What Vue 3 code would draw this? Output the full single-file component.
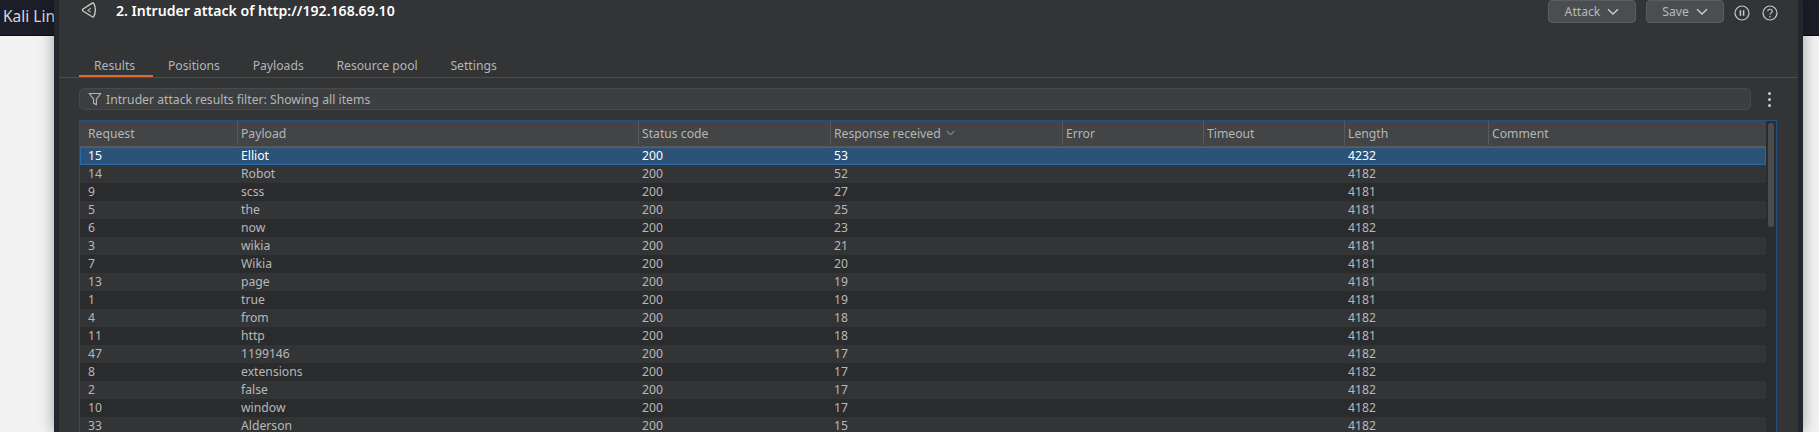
<template>
  <div class="desktop">
    <header class="topbar">
      <span class="topbar-text">Kali Linux</span>
    </header>

    <section class="attack-window">
      <div class="title-row">
        <svg class="logo" viewBox="0 0 16 16" width="16" height="16" fill="none" stroke="#cfcfcf" stroke-width="1.3">
          <path d="M11.6 0.9 Q12.3 0.7 12.7 1.3 C14.9 5 14.9 11 12.7 14.7 Q12.3 15.3 11.6 15 L2 9 Q0.8 8 2 7 Z" stroke-linejoin="round" />
          <path d="M10 6 L6.6 8.4 L9.8 10" stroke-width="1" />
        </svg>
        <h1 class="title">2. Intruder attack of http://192.168.69.10</h1>
        <div class="title-actions">
          <button class="action-btn attack-btn">
            Attack
            <svg viewBox="0 0 12 8" width="12" height="8" fill="none" stroke="#c8cacc" stroke-width="1.5"><path d="M1 1.2 L6 6 L11 1.2" /></svg>
          </button>
          <button class="action-btn save-btn">
            Save
            <svg viewBox="0 0 12 8" width="12" height="8" fill="none" stroke="#c8cacc" stroke-width="1.5"><path d="M1 1.2 L6 6 L11 1.2" /></svg>
          </button>
          <svg class="round-icon" viewBox="0 0 16 16" width="16" height="16" fill="none" stroke="#c8c8c8" stroke-width="1.2">
            <circle cx="8" cy="8" r="7" />
            <path d="M6.4 5.2 V10.8 M9.6 5.2 V10.8" stroke-width="1.5" />
          </svg>
          <svg class="round-icon" viewBox="0 0 16 16" width="16" height="16" fill="none" stroke="#c8c8c8" stroke-width="1.2">
            <circle cx="8" cy="8" r="7" />
            <path d="M5.8 6.2 C5.8 3.6 10.2 3.6 10.2 6.2 C10.2 8 8 7.8 8 9.8" />
            <circle cx="8" cy="11.8" r="0.8" fill="#c8c8c8" stroke="none" />
          </svg>
        </div>
      </div>

      <nav class="tabs">
        <span v-for="(tab, i) in tabs" :key="tab" :class="['tab', { active: i === 0 }]">{{ tab }}</span>
      </nav>

      <div class="filter-row">
        <div class="filter">
          <svg viewBox="0 0 14 14" width="14" height="14" fill="none" stroke="#b8b8b8" stroke-width="1.1">
            <path d="M1.2 1.5 H12.8 L8.4 7.2 V12.8 L5.6 11.2 V7.2 Z" stroke-linejoin="round" />
          </svg>
          <span>Intruder attack results filter: Showing all items</span>
        </div>
        <div class="kebab"><i></i><i></i><i></i></div>
      </div>

      <div class="table">
        <div class="table-main">
          <div class="row head">
            <div v-for="col in columns" :key="col" class="cell">
              {{ col }}
              <svg v-if="col === 'Response received'" class="sort" viewBox="0 0 10 6" width="9" height="6" fill="none" stroke="#b8b8b8" stroke-width="1"><path d="M0.8 0.8 L5 5 L9.2 0.8" /></svg>
            </div>
          </div>
          <div
            v-for="(r, i) in rows"
            :key="r[0]"
            :class="['row', 'body-row', { selected: i === 0, alt: i > 0 && i % 2 === 0 }]"
          >
            <div class="cell">{{ r[0] }}</div>
            <div class="cell">{{ r[1] }}</div>
            <div class="cell">200</div>
            <div class="cell">{{ r[2] }}</div>
            <div class="cell"></div>
            <div class="cell"></div>
            <div class="cell">{{ r[3] }}</div>
            <div class="cell"></div>
          </div>
        </div>
        <div class="scrollbar"><div class="thumb"></div></div>
      </div>
    </section>
  </div>
</template>

<script setup>
const tabs = ['Results', 'Positions', 'Payloads', 'Resource pool', 'Settings']
const columns = ['Request', 'Payload', 'Status code', 'Response received', 'Error', 'Timeout', 'Length', 'Comment']

const rows = [
  [15, 'Elliot', 53, 4232],
  [14, 'Robot', 52, 4182],
  [9, 'scss', 27, 4181],
  [5, 'the', 25, 4181],
  [6, 'now', 23, 4182],
  [3, 'wikia', 21, 4181],
  [7, 'Wikia', 20, 4181],
  [13, 'page', 19, 4181],
  [1, 'true', 19, 4181],
  [4, 'from', 18, 4182],
  [11, 'http', 18, 4181],
  [47, '1199146', 17, 4182],
  [8, 'extensions', 17, 4182],
  [2, 'false', 17, 4182],
  [10, 'window', 17, 4182],
  [33, 'Alderson', 15, 4182]
]
</script>

<style>
html,
body {
  margin: 0;
  overflow: hidden;
}
</style>

<style scoped>
.desktop {
  position: relative;
  width: 1819px;
  height: 432px;
  overflow: hidden;
  background: #f2f2f2;
  font-family: "Noto Sans", "Liberation Sans", sans-serif;
  font-size: 12.2px;
}

.topbar {
  height: 36px;
  background: #1b1e28;
  border-bottom: 1px solid #0c0d12;
  box-sizing: border-box;
  padding: 0 0 4px 3px;
  display: flex;
  align-items: center;
}

.topbar-text {
  color: #d6d8dc;
  font-size: 15.5px;
}

/* Burp window */
.attack-window {
  position: absolute;
  left: 54px;
  top: 0;
  width: 1749px;
  height: 432px;
  box-sizing: border-box;
  background: #323436;
  border-left: 5px solid #23262d;
  border-right: 5px solid #23262d;
  box-shadow: 0 0 14px rgba(0, 0, 0, 0.35);
  overflow: hidden;
}

.title-row {
  height: 21px;
  display: flex;
  align-items: center;
  padding: 0 20px 0 22px;
}

.logo {
  margin-top: -1px;
}

.title {
  margin: 0 0 0 19px;
  font-size: 14.1px;
  font-weight: 600;
  color: #fff;
}

.title-actions {
  margin-left: auto;
  display: flex;
  align-items: center;
}

.action-btn {
  height: 23px;
  margin-top: 2px;
  box-sizing: border-box;
  display: flex;
  align-items: center;
  justify-content: center;
  gap: 7px;
  background: #4a4e51;
  border: 1px solid #5a5e61;
  border-radius: 4px;
  color: #b8babc;
  font-family: inherit;
  font-size: 12.2px;
  padding: 0;
}

.attack-btn {
  width: 88px;
  margin-right: 10px;
}

.save-btn {
  width: 78px;
  margin-right: 10px;
}

.round-icon {
  margin-top: 4px;
}

.round-icon + .round-icon {
  margin-left: 12px;
}

/* Tabs */
.tabs {
  height: 57px;
  box-sizing: border-box;
  display: flex;
  align-items: flex-end;
  padding-left: 20px;
  border-bottom: 1px solid #4b4d4f;
}

.tab {
  height: 32px;
  box-sizing: border-box;
  padding: 11px 17.7px 0 15px;
  line-height: 20px;
  color: #b4b6b8;
}

.tab.active {
  border-bottom: 2px solid #e0692f;
}

/* Filter */
.filter-row {
  display: flex;
  align-items: center;
  margin-top: 10px;
  padding-left: 20px;
}

.filter {
  width: 1672px;
  height: 22px;
  box-sizing: border-box;
  display: flex;
  align-items: center;
  gap: 4px;
  padding-left: 8px;
  background: #3c3e40;
  border: 1px solid #47494b;
  border-radius: 5px;
  color: #b4b6b8;
}

.kebab {
  margin-left: 17px;
  display: flex;
  flex-direction: column;
  gap: 3px;
}

.kebab i {
  display: block;
  width: 3px;
  height: 3px;
  border-radius: 50%;
  background: #c8c8c8;
}

/* Table */
.table {
  margin: 10px 0 0 20px;
  width: 1698px;
  height: 320px;
  box-sizing: border-box;
  display: flex;
  border: 1px solid #24527f;
  border-bottom: 0;
}

.table-main {
  flex: 1;
  min-width: 0;
}

.row {
  display: grid;
  grid-template-columns: 157px 401px 192px 232px 141px 141px 144px 1fr;
}

.head {
  height: 26px;
  padding-bottom: 1px;
  background: #424446;
  border-bottom: 1px solid #55575a;
  box-sizing: border-box;
  color: #b4b6b8;
}

.head .cell {
  display: flex;
  align-items: center;
  border-left: 1px solid #58595b;
  padding-left: 3px;
}

.head .cell:first-child {
  border-left: 0;
  padding-left: 8px;
}

.sort {
  margin-left: 5px;
}

.body-row {
  height: 18px;
  line-height: 18px;
  background: #323436;
  color: #b8b8b8;
}

.body-row.alt {
  background: #2a2b2d;
}

.body-row.selected {
  background: #2c5278;
  color: #fff;
  outline: 1px solid #2a6aa8;
  outline-offset: -1px;
}

.body-row .cell {
  padding-left: 4px;
  white-space: nowrap;
}

.body-row .cell:first-child {
  padding-left: 8px;
}

.scrollbar {
  width: 10px;
  background: #2b2c2e;
  padding-top: 2px;
}

.thumb {
  width: 6px;
  margin-left: 2px;
  height: 104px;
  border-radius: 3px;
  background: #4a4c4e;
}
</style>
